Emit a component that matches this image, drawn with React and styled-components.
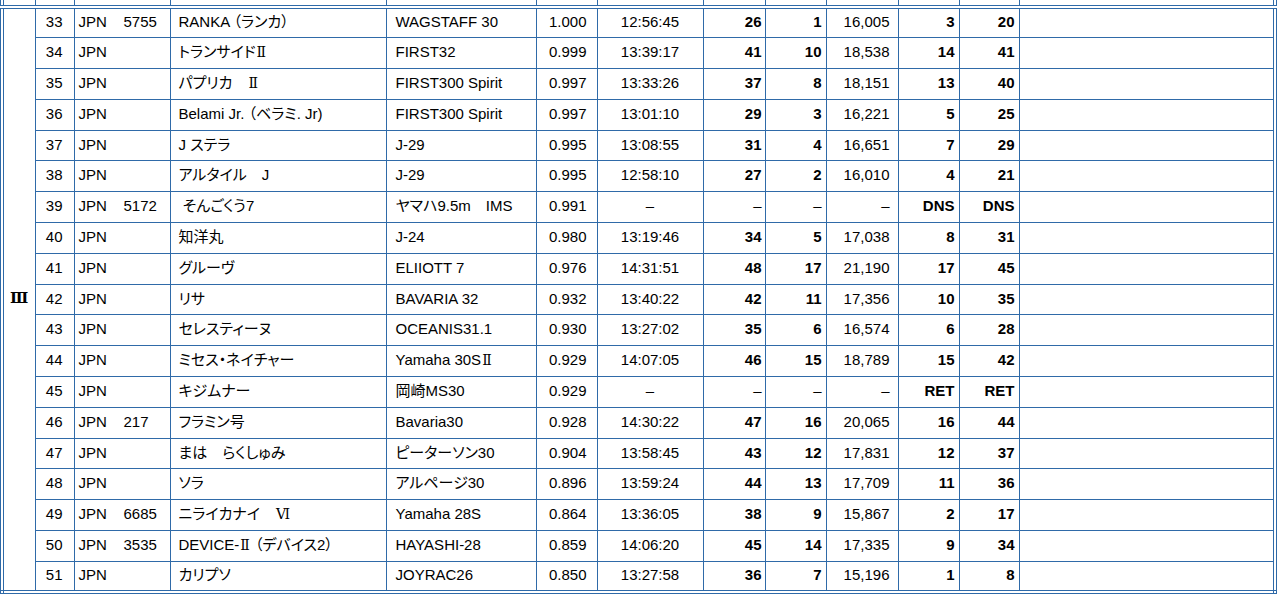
import React from 'react';
import styled, { createGlobalStyle } from 'styled-components';

const line = '#2f6aa8';

const GlobalStyle = createGlobalStyle`
  html, body {
    margin: 0;
    padding: 0;
    background: #ffffff;
  }
  body {
    font-family: "Liberation Sans", "Noto Sans CJK JP", sans-serif;
    font-size: 15px;
    color: #000;
  }
`;

const columns = [
  { width: 33 },
  { width: 39, align: 'right', pad: '0 11px 2px 0' },
  { width: 96, align: 'left', pad: '0 0 2px 4px' },
  { width: 216, align: 'left', pad: '0 0 2px 8px' },
  { width: 150, align: 'left', pad: '0 0 2px 9px' },
  { width: 61, align: 'right', pad: '0 10px 2px 0' },
  { width: 106, align: 'center', pad: '0 0 2px 0' },
  { width: 62, align: 'right', pad: '0 3px 2px 0', bold: true },
  { width: 61, align: 'right', pad: '0 4px 2px 0', bold: true },
  { width: 72, align: 'right', pad: '0 8px 2px 0' },
  { width: 61, align: 'right', pad: '0 4px 2px 0', bold: true },
  { width: 60, align: 'right', pad: '0 4px 2px 0', bold: true },
  { width: 256, align: 'left', pad: '0' },
];

const DASH = '–';

const rows = [
  ['33', 'JPN    5755', 'RANKA （ランカ）', 'WAGSTAFF 30', '1.000', '12:56:45', '26', '1', '16,005', '3', '20'],
  ['34', 'JPN', 'トランサイドⅡ', 'FIRST32', '0.999', '13:39:17', '41', '10', '18,538', '14', '41'],
  ['35', 'JPN', 'パプリカ　Ⅱ', 'FIRST300 Spirit', '0.997', '13:33:26', '37', '8', '18,151', '13', '40'],
  ['36', 'JPN', 'Belami Jr. （ベラミ. Jr)', 'FIRST300 Spirit', '0.997', '13:01:10', '29', '3', '16,221', '5', '25'],
  ['37', 'JPN', 'J ステラ', 'J-29', '0.995', '13:08:55', '31', '4', '16,651', '7', '29'],
  ['38', 'JPN', 'アルタイル　J', 'J-29', '0.995', '12:58:10', '27', '2', '16,010', '4', '21'],
  ['39', 'JPN    5172', ' そんごくう7', 'ヤマハ9.5m　IMS', '0.991', DASH, DASH, DASH, DASH, 'DNS', 'DNS'],
  ['40', 'JPN', '知洋丸', 'J-24', '0.980', '13:19:46', '34', '5', '17,038', '8', '31'],
  ['41', 'JPN', 'グルーヴ', 'ELIIOTT 7', '0.976', '14:31:51', '48', '17', '21,190', '17', '45'],
  ['42', 'JPN', 'リサ', 'BAVARIA 32', '0.932', '13:40:22', '42', '11', '17,356', '10', '35'],
  ['43', 'JPN', 'セレスティーヌ', 'OCEANIS31.1', '0.930', '13:27:02', '35', '6', '16,574', '6', '28'],
  ['44', 'JPN', 'ミセス・ネイチャー', 'Yamaha 30SⅡ', '0.929', '14:07:05', '46', '15', '18,789', '15', '42'],
  ['45', 'JPN', 'キジムナー', '岡崎MS30', '0.929', DASH, DASH, DASH, DASH, 'RET', 'RET'],
  ['46', 'JPN    217', 'フラミン号', 'Bavaria30', '0.928', '14:30:22', '47', '16', '20,065', '16', '44'],
  ['47', 'JPN', 'まは　らくしゅみ', 'ピーターソン30', '0.904', '13:58:45', '43', '12', '17,831', '12', '37'],
  ['48', 'JPN', 'ソラ', 'アルページ30', '0.896', '13:59:24', '44', '13', '17,709', '11', '36'],
  ['49', 'JPN    6685', 'ニライカナイ　Ⅵ', 'Yamaha 28S', '0.864', '13:36:05', '38', '9', '15,867', '2', '17'],
  ['50', 'JPN    3535', 'DEVICE-Ⅱ （デバイス2）', 'HAYASHI-28', '0.859', '14:06:20', '45', '14', '17,335', '9', '34'],
  ['51', 'JPN', 'カリプソ', 'JOYRAC26', '0.850', '13:27:58', '36', '7', '15,196', '1', '8'],
];

// roman numerals come from a serif face, like the original sheet
const withRoman = (text) =>
  text.split(/([Ⅰ-Ⅻ])/).map((part, i) =>
    /[Ⅰ-Ⅻ]/.test(part) ? <Roman key={i}>{part}</Roman> : part
  );

export default function App() {
  return (
    <>
      <GlobalStyle />
      <ResultTable>
        <colgroup>
          {columns.map((c, i) => (
            <col key={i} style={{ width: c.width }} />
          ))}
        </colgroup>
        <tbody>
          <StubRow>
            {columns.map((c, i) => (
              <StubCell key={i} />
            ))}
          </StubRow>
          {rows.map((r, ri) => (
            <Row key={r[0]}>
              {ri === 0 && (
                <ClassCell rowSpan={rows.length}>Ⅲ</ClassCell>
              )}
              {r.map((v, ci) => {
                const c = columns[ci + 1];
                const isDash = v === DASH;
                return (
                  <Cell
                    key={ci}
                    $align={c.align}
                    $pad={c.pad}
                    $bold={c.bold && !isDash}
                    $first={ri === 0}
                  >
                    {withRoman(v)}
                  </Cell>
                );
              })}
              <Cell $align="left" $pad="0" $first={ri === 0} />
            </Row>
          ))}
        </tbody>
      </ResultTable>
    </>
  );
}

const ResultTable = styled.table`
  width: 1277px;
  table-layout: fixed;
  border-collapse: collapse;
  border-left: 4px double ${line};
  border-right: 4px double ${line};
  border-bottom: 4px double ${line};
`;

const StubRow = styled.tr`
  height: 5px;
`;

const StubCell = styled.td`
  padding: 0;
  height: 5px;
  line-height: 0;
  font-size: 0;
  border-left: 1px solid ${line};
  border-right: 1px solid ${line};
`;

const Row = styled.tr`
  height: 30.8px;
`;

const Cell = styled.td`
  padding: ${(p) => p.$pad};
  text-align: ${(p) => p.$align};
  font-weight: ${(p) => (p.$bold ? 700 : 400)};
  border: 1px solid ${line};
  border-top: ${(p) => (p.$first ? `4px double ${line}` : `1px solid ${line}`)};
  white-space: pre;
  overflow: hidden;
  vertical-align: middle;
  line-height: 18px;
  font-feature-settings: "palt";
`;

const Roman = styled.span`
  font-family: "DejaVu Serif", serif;
  font-size: 14px;
  padding: 0 1px;
`;

const ClassCell = styled.td`
  padding: 0 0 4px 0;
  text-align: center;
  vertical-align: middle;
  font-family: "DejaVu Serif", serif;
  font-weight: 700;
  font-size: 15px;
  border: 1px solid ${line};
  border-top: 4px double ${line};
`;
